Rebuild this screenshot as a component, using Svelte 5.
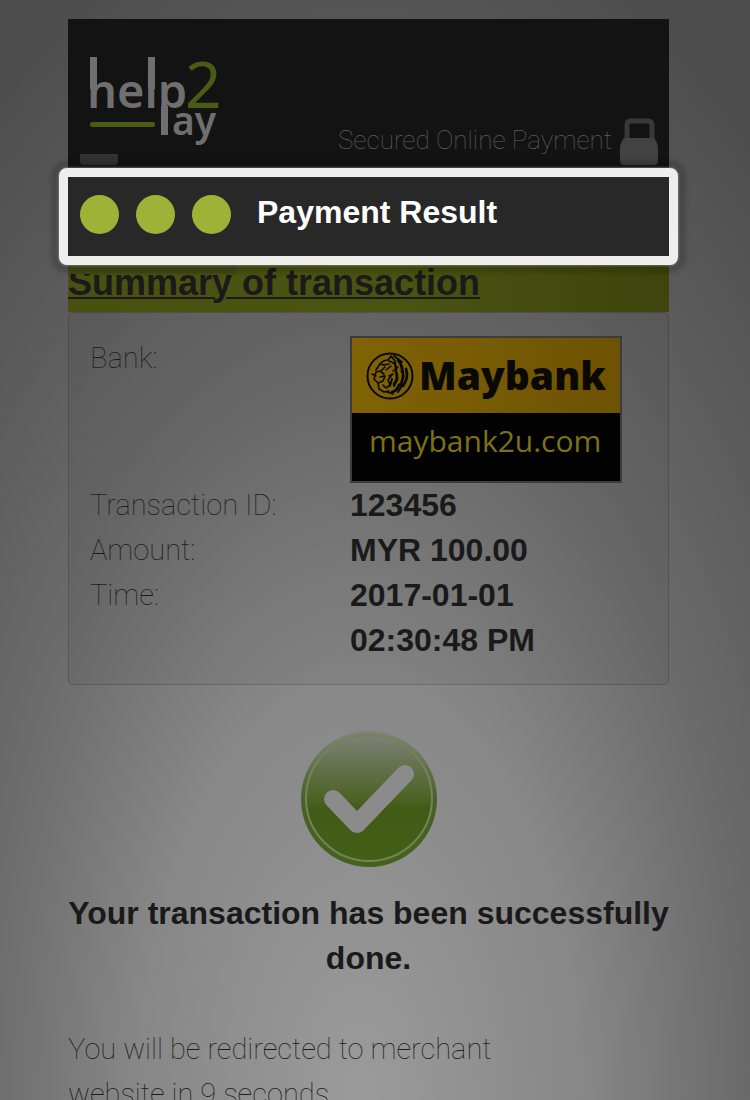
<script>
  const steps = [1, 2, 3];
  const details = [
    { label: 'Transaction ID:', value: '123456' },
    { label: 'Amount:', value: 'MYR 100.00' },
    { label: 'Time:', value: '2017-01-01 02:30:48 PM' }
  ];
</script>

<div class="page">
  <header>
    <svg class="logo" viewBox="0 0 130 92" role="img" aria-label="help2pay">
      <g fill="#6f6f6f">
        <text x="-3" y="52" class="word">help</text>
        <rect x="0" y="1" width="7" height="32" />
        <rect x="58" y="1" width="7" height="32" />
        <rect x="71" y="50" width="7" height="29" />
        <text x="82" y="79" class="small">ay</text>
      </g>
      <text x="95" y="52" class="two">2</text>
      <rect x="0" y="66" width="65" height="5" rx="2" fill="#4c5a14" />
    </svg>
    <p class="secured">
      <span>Secured Online Payment</span>
      <svg class="lock" viewBox="0 0 40 48" aria-hidden="true">
        <path d="M8 22V7q0-4 4-4h17q4 0 4 4v15" fill="none" stroke="#393939" stroke-width="5" />
        <path d="M6 20h28q2 0 3 3 2 3 2 8v12q0 4-4 4H5q-4 0-4-4V31q0-5 2-8 1-3 3-3z" fill="#424242" />
      </svg>
    </p>
    <div class="tab"></div>
  </header>

  <section class="result">
    <div class="dots">
      {#each steps as step (step)}<span class="dot"></span>{/each}
    </div>
    <h1>Payment Result</h1>
  </section>

  <h2>Summary of transaction</h2>

  <dl>
    <dt>Bank:</dt>
    <dd>
      <svg class="bank" viewBox="0 0 272 147" role="img" aria-label="Maybank maybank2u.com">
        <defs>
          <linearGradient id="gold" x1="0" x2="1" y1="0" y2="0">
            <stop offset="0" stop-color="#806305" />
            <stop offset="1" stop-color="#6e5203" />
          </linearGradient>
        </defs>
        <rect x="1" y="1" width="270" height="145" fill="#020202" stroke="#3c3c3c" stroke-width="2" />
        <rect x="2" y="2" width="268" height="75" fill="url(#gold)" />
        <g fill="none" stroke="#0b0903" stroke-linecap="round" stroke-linejoin="round">
          <circle cx="40" cy="40" r="22.5" stroke-width="2" />
          <path stroke-width="1.6" d="M38 24l3-4 4 5M29 29q4-5 9-5M26 34l4-6 4 1M24 43l2-7 5-1 4-4M24 43l4 4 5-2 2-5M31 36l3 2M36 34l5-4M28 47l1 6 5 3 5-1M33 49l3 3 4-3-2-5 4-5M39 25q7 2 8 8M43 35l5-4M34 29l5-1M22 38l4 2M39 40l4-2M30 41l4-1M37 56l6 2" />
          <path stroke-width="2.8" d="M48 24q5 6 4 12M52 33q3 9-2 16M46 36q3 7-2 12M49 49q-2 6-7 7M56 33q3 9-3 17" />
          <path stroke-width="2" d="M45 26l1 8M42 43l-2 7M47 43l-3 7M53 48l-5 8M44 20l8 6" />
        </g>
        <text x="69" y="54" class="maybank">Maybank</text>
        <text x="19" y="116" class="site">maybank2u.com</text>
      </svg>
    </dd>
    {#each details as row (row.label)}
      <dt>{row.label}</dt>
      <dd>{row.value}</dd>
    {/each}
  </dl>

  <svg class="check" viewBox="0 0 136 136" role="img" aria-label="Success">
    <defs>
      <linearGradient id="ball" x1="0" x2="0" y1="0" y2="1">
        <stop offset="0" stop-color="#7d8177" />
        <stop offset="0.2" stop-color="#697455" />
        <stop offset="0.52" stop-color="#4b6222" />
        <stop offset="0.58" stop-color="#415b17" />
        <stop offset="1" stop-color="#425f16" />
      </linearGradient>
      <linearGradient id="rim" x1="0" x2="0" y1="0" y2="1">
        <stop offset="0" stop-color="#80837c" />
        <stop offset="0.5" stop-color="#48602a" />
        <stop offset="1" stop-color="#46611d" />
      </linearGradient>
    </defs>
    <circle cx="68" cy="68" r="68" fill="url(#rim)" />
    <circle cx="68" cy="67" r="63" fill="url(#ball)" stroke="#738454" stroke-width="2" />
    <path d="M32 68l24 25 48-50" fill="none" stroke="#8b8b8b" stroke-width="18" stroke-linecap="round" stroke-linejoin="round" />
  </svg>

  <p class="done">Your transaction has been successfully done.</p>
  <p class="redirect">You will be redirected to merchant website in 9 seconds.</p>
</div>

<style>
  :global(body) {
    margin: 0;
  }

  .page {
    box-sizing: border-box;
    height: 100vh;
    overflow: hidden;
    padding: 19px 81px 0 68px;
    font-family: 'Liberation Sans', Arial, sans-serif;
    font-size: 32px;
    line-height: 45px;
    color: #1a1a1a;
    background: radial-gradient(
      ellipse 85% 112% at 48% 100%,
      #9b9b9b 0%,
      #878787 35%,
      #767676 50%,
      #6b6b6b 60%,
      #5f5f5f 75%,
      #4d4d4d 100%
    );
  }

  header {
    position: relative;
    box-sizing: border-box;
    height: 149px;
    padding: 37px 10px 2px 22px;
    display: flex;
    justify-content: space-between;
    background: #131313;
  }

  .logo {
    width: 130px;
    height: 92px;
    overflow: visible;
    font-family: 'Noto Sans', sans-serif;
  }

  .word {
    font-size: 47px;
    font-weight: 600;
  }

  .small {
    font-size: 39px;
    font-weight: 600;
  }

  .two {
    font-size: 64px;
    fill: #4c5a14;
  }

  .secured {
    display: flex;
    align-items: flex-end;
    gap: 7px;
    margin: 0;
    font-family: Roboto, sans-serif;
    font-size: 26px;
    line-height: 51px;
    font-weight: 100;
    color: #5c5c5c;
  }

  .lock {
    width: 40px;
    height: 48px;
  }

  .tab {
    position: absolute;
    left: 12px;
    bottom: 3px;
    width: 38px;
    height: 11px;
    border-radius: 0 0 4px 4px;
    background: #333;
  }

  .result {
    position: relative;
    z-index: 1;
    display: flex;
    align-items: center;
    gap: 26px;
    height: 79px;
    margin: 0 -9px;
    padding-left: 12px;
    border: 9px solid #eeeeec;
    border-radius: 8px;
    background: #282828;
    background-clip: padding-box;
    box-shadow: 0 0 2px 1px rgba(160, 160, 160, 0.5), 0 0 4px 8px rgba(0, 0, 0, 0.16);
  }

  .dots {
    display: flex;
    gap: 17px;
    padding-bottom: 4px;
  }

  .dot {
    width: 39px;
    height: 39px;
    border-radius: 50%;
    background: #9eb237;
  }

  h1 {
    margin: 0;
    padding-bottom: 8px;
    font-size: 32px;
    color: #fff;
  }

  h2 {
    position: relative;
    margin: -9px 0 0;
    padding: 9px 0 11px;
    font-size: 36px;
    line-height: 36px;
    text-decoration: underline;
    text-decoration-thickness: 2px;
    text-underline-offset: 2px;
    background: linear-gradient(90deg, #495110, #4a5412 55%, #3d440c);
  }

  h2::before {
    content: '';
    position: absolute;
    top: 0;
    left: 0;
    width: 28%;
    height: 18px;
    background: #434a16;
  }

  dl {
    display: grid;
    grid-template-columns: 260px 1fr;
    margin: 0;
    padding: 23px 21px 21px;
    border: 1px solid rgba(0, 0, 0, 0.16);
    border-radius: 5px;
    background: rgba(0, 0, 0, 0.04);
  }

  dt,
  .redirect {
    font-family: Roboto, sans-serif;
    font-size: 29px;
    font-weight: 100;
    color: #1c1c1c;
  }

  dd {
    margin: 0;
    font-weight: 700;
  }

  .bank {
    display: block;
    width: 272px;
    height: 147px;
  }

  .maybank {
    font: 800 39px 'Open Sans', sans-serif;
    fill: #0b0903;
  }

  .site {
    font: 400 30px 'Open Sans', sans-serif;
    fill: #7d7213;
  }

  .check {
    display: block;
    width: 136px;
    height: 136px;
    margin: 46px auto 24px;
  }

  .done {
    margin: 0 0 46px;
    font-weight: 700;
    text-align: center;
  }

  .redirect {
    max-width: 480px;
    margin: 0;
  }
</style>
